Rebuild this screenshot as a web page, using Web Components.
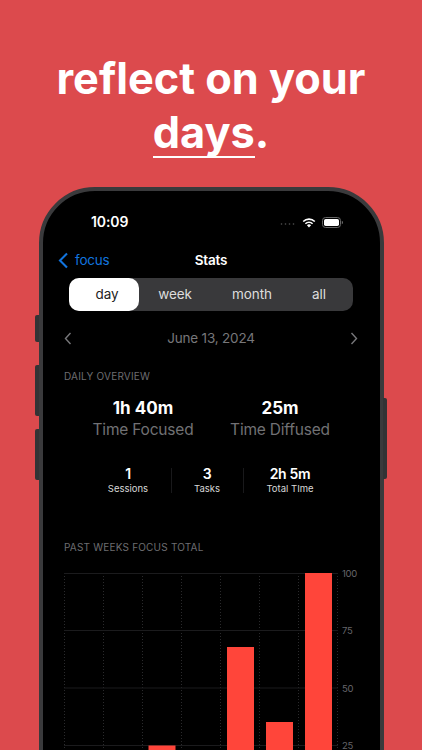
<!DOCTYPE html>
<html lang="en"><head><meta charset="utf-8"><title>reflect on your days</title>
<style>html,body{margin:0;padding:0;height:750px;overflow:hidden;background:#dc4a4d;font-family:Inter,"Liberation Sans",sans-serif}</style>
</head><body>
<promo-page>
  <hero-title slot="hero"></hero-title>
  <phone-frame slot="device">
    <status-bar></status-bar>
    <nav-bar></nav-bar>
    <segment-control></segment-control>
    <date-row></date-row>
    <section-label style="margin-top:20px">DAILY OVERVIEW</section-label>
    <overview-metrics></overview-metrics>
    <stat-row></stat-row>
    <section-label style="margin-top:45px">PAST WEEKS FOCUS TOTAL</section-label>
    <bar-chart></bar-chart>
  </phone-frame>
</promo-page>
<script>
function def(name, html){
  customElements.define(name, class extends HTMLElement{
    constructor(){super();this.attachShadow({mode:'open'}).innerHTML=html;}
  });
}
def('promo-page',`<style>:host{display:flex;flex-direction:column;align-items:center;width:422px;height:750px;overflow:hidden;background:#dc4a4d}</style><slot name="hero"></slot><slot name="device"></slot>`);
def('hero-title',`<style>:host{display:block;flex:none;width:100%;height:187px;box-sizing:border-box;padding-top:51px;text-align:center;color:#fff;font:700 43.3px/54px Inter,sans-serif}
span{display:inline-block;line-height:48px;border-bottom:2px solid #fff}</style>reflect on your<br><span>days</span>.`);
def('phone-frame',`<style>:host{display:block;position:relative;width:345px;height:800px;flex:none}
.body{box-sizing:border-box;height:100%;background:#000;border:4px solid #3a3a3c;border-radius:56px;padding:0 21.5px;overflow:hidden;color:#fff}
.btn{position:absolute;width:4px;background:#333335;border-radius:2px 0 0 2px;left:-3.5px}
.r{left:auto;right:-3.5px;border-radius:0 2px 2px 0}</style>
<i class="btn" style="top:128px;height:27px"></i><i class="btn" style="top:178px;height:51px"></i><i class="btn" style="top:242px;height:51px"></i><i class="btn r" style="top:211px;height:81px"></i>
<div class="body"><slot></slot></div>`);
def('status-bar',`<style>:host{display:flex;align-items:center;justify-content:space-between;height:18px;padding:22px 15px 0 27px;font:600 14px/18px Inter,sans-serif;letter-spacing:-.1px;color:#fff}
.r{display:flex;align-items:center}
svg{display:block}</style><span>10:09</span>
<div class="r">
<svg width="16" height="5" viewBox="0 0 16 5" style="margin:3px 6px 0 0"><g fill="#555"><circle cx="1.5" cy="3" r=".8"/><circle cx="5.5" cy="3" r=".8"/><circle cx="9.5" cy="3" r=".8"/><circle cx="13.5" cy="3" r=".8"/></g></svg>
<svg width="14" height="11" viewBox="0 0 14 11" style="margin-right:6px"><path d="M7 10.6 4.9 8.3a3 3 0 0 1 4.2 0Z" fill="#fff"/><path d="M3.4 6.8a5 5 0 0 1 7.2 0M1.2 4.5a8.2 8.2 0 0 1 11.6 0" fill="none" stroke="#fff" stroke-width="1.6"/></svg>
<svg width="21" height="11" viewBox="0 0 21 11"><rect x=".5" y=".5" width="18" height="10" rx="3" fill="none" stroke="#666"/><rect x="2" y="2" width="15" height="7" rx="1.7" fill="#fff"/><path d="M19.8 3.8a1.8 1.8 0 0 1 0 3.4Z" fill="#666"/></svg>
</div>`);
def('nav-bar',`<style>:host{display:flex;align-items:center;position:relative;height:22px;margin:18px 0 0 -6px;font:400 13.5px/22px Inter,sans-serif;letter-spacing:-.2px;color:#1274de}
svg{display:block;margin-right:6px}
b{position:absolute;left:6px;right:0;text-align:center;color:#fff;font-weight:600}</style>
<svg width="11" height="17" viewBox="0 0 11 17"><path d="M9 1.5 2 8.5l7 7" fill="none" stroke="#1274de" stroke-width="2.1"/></svg><span>focus</span><b>Stats</b>`);
def('segment-control',`<style>:host{display:grid;grid-template-columns:70px 72px 82px 60px;height:33px;margin:7px 0 0 5px;width:284px;background:#39393b;border-radius:10px;font:400 13.5px/33px Inter,sans-serif;letter-spacing:-.1px;color:#ddd;text-align:center}
.on{background:#fff;color:#222;border-radius:10px;padding-left:6px}.e{padding-right:8px}</style>
<div class="on">day</div><div>week</div><div>month</div><div class="e">all</div>`);
def('date-row',`<style>:host{display:flex;align-items:center;justify-content:space-between;height:22px;margin-top:16px;font:400 13.5px/22px Inter,sans-serif;letter-spacing:-.2px;color:#77777a}svg{display:block}</style>
<svg width="8" height="13" viewBox="0 0 8 13"><path d="M6.5 1 1.5 6.5l5 5.5" fill="none" stroke="#77777a" stroke-width="1.4"/></svg><span>June 13, 2024</span>
<svg width="8" height="13" viewBox="0 0 8 13"><path d="M1.5 1l5 5.5-5 5.5" fill="none" stroke="#77777a" stroke-width="1.4"/></svg>`);
def('section-label',`<style>:host{display:block;font:400 10px/14px Inter,sans-serif;letter-spacing:.2px;color:#6d6d70}</style><slot></slot>`);
def('overview-metrics',`<style>:host{display:grid;grid-template-columns:158px 116px;height:50px;margin-top:14px;text-align:center}
b{display:block;font:700 17px/22px Inter,sans-serif;color:#fff}
span{display:block;font:400 15.5px/22px Inter,sans-serif;letter-spacing:-.2px;color:#717174}</style>
<div><b>1h 40m</b><span>Time Focused</span></div><div><b>25m</b><span>Time Diffused</span></div>`);
def('stat-row',`<style>:host{display:grid;grid-template-columns:86px 72px 94px;margin:18px 0 0 21px;text-align:center;height:30px}
div{position:relative}
div+div::before{content:"";position:absolute;left:0;top:3px;height:25px;width:1px;background:#19191b}
b{display:block;font:600 14px/18px Inter,sans-serif;letter-spacing:-.3px;color:#fff}
span{display:block;font:400 9.5px/12px Inter,sans-serif;color:#d8d8d8}</style>
<div><b>1</b><span>Sessions</span></div><div><b>3</b><span>Tasks</span></div><div><b>2h 5m</b><span>Total TIme</span></div>`);
def('bar-chart',`<style>:host{display:block;margin-top:19px}svg{display:block;overflow:visible}text{font:400 9.5px Inter,sans-serif;letter-spacing:-.3px;fill:#66666a}</style>
<svg width="300" height="190" viewBox="0 0 300 190">
<g stroke="#2a2a2c" stroke-width="1" stroke-dasharray="1 2">
<path d="M.5 0V200M39.5 0V200M78.5 0V200M117.5 0V200M156.5 0V200M195.5 0V200M234.5 0V200M273.5 0V200"/></g>
<g stroke="#1b1b1d" stroke-width="1"><path d="M0 .5H274M0 57.5H274M0 115H274M0 172.5H274"/></g>
<g fill="#ff453a"><rect x="84.5" y="172.5" width="27" height="30"/><rect x="163" y="74" width="27" height="130"/><rect x="202" y="149" width="27" height="55"/><rect x="241" y="0" width="27" height="204"/></g>
<text x="278" y="4">100</text><text x="278" y="61">75</text><text x="278" y="119">50</text><text x="278" y="176">25</text>
</svg>`);
</script>
</body></html>
